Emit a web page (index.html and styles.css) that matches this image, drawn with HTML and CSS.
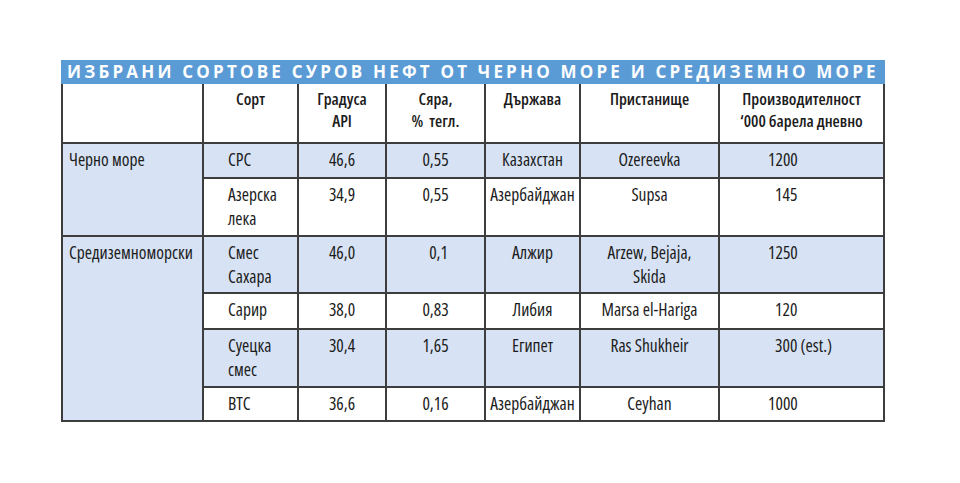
FILE: index.html
```html
<!DOCTYPE html>
<html lang="bg">
<head>
<meta charset="utf-8">
<title>Избрани сортове суров нефт</title>
<link rel="stylesheet" href="styles.css">
</head>
<body>
<div class="page">
  <div class="sheet">
    <div class="title">ИЗБРАНИ СОРТОВЕ СУРОВ НЕФТ ОТ ЧЕРНО МОРЕ И СРЕДИЗЕМНО МОРЕ</div>
    <table class="grid">
      <colgroup>
        <col class="c1"><col class="c2"><col class="c3"><col class="c4"><col class="c5"><col class="c6"><col class="c7">
      </colgroup>
      <thead>
        <tr class="r-head">
          <th></th>
          <th>Сорт</th>
          <th>Градуса<br>API</th>
          <th>Сяра,<br>%&nbsp; тегл.</th>
          <th>Държава</th>
          <th>Пристанище</th>
          <th>Производителност<br>‘000 барела дневно</th>
        </tr>
      </thead>
      <tbody>
        <tr class="r-1 blue">
          <td class="region" rowspan="2">Черно море</td>
          <td class="sort">CPC</td>
          <td>46,6</td>
          <td>0,55</td>
          <td>Казахстан</td>
          <td>Ozereevka</td>
          <td class="prod">1200</td>
        </tr>
        <tr class="r-2">
          <td class="sort">Азерска<br>лека</td>
          <td>34,9</td>
          <td>0,55</td>
          <td>Азербайджан</td>
          <td>Supsa</td>
          <td class="prod short">145</td>
        </tr>
        <tr class="r-3 blue">
          <td class="region" rowspan="4">Средиземноморски</td>
          <td class="sort">Смес<br>Сахара</td>
          <td>46,0</td>
          <td class="shift">0,1</td>
          <td>Алжир</td>
          <td>Arzew, Bejaja,<br>Skida</td>
          <td class="prod">1250</td>
        </tr>
        <tr class="r-4">
          <td class="sort">Сарир</td>
          <td>38,0</td>
          <td>0,83</td>
          <td>Либия</td>
          <td>Marsa el-Hariga</td>
          <td class="prod short">120</td>
        </tr>
        <tr class="r-5 blue">
          <td class="sort">Суецка<br>смес</td>
          <td>30,4</td>
          <td>1,65</td>
          <td>Египет</td>
          <td>Ras Shukheir</td>
          <td class="prod short">300 (est.)</td>
        </tr>
        <tr class="r-6">
          <td class="sort">BTC</td>
          <td>36,6</td>
          <td>0,16</td>
          <td>Азербайджан</td>
          <td>Ceyhan</td>
          <td class="prod">1000</td>
        </tr>
      </tbody>
    </table>
  </div>
</div>
</body>
</html>
```

FILE: styles.css
```css
html, body {
  margin: 0;
  padding: 0;
  background: #ffffff;
}

.page {
  padding: 60px 0 0 61px;
}

.sheet {
  width: 824px;
}

.title {
  background: #5b9bd5;
  color: #ffffff;
  font-family: "Open Sans", "DejaVu Sans", sans-serif;
  font-weight: 700;
  font-size: 17px;
  line-height: 24px;
  height: 24px;
  letter-spacing: 3.2px;
  padding-left: 6px;
  white-space: nowrap;
  overflow: hidden;
}

.grid {
  width: 824px;
  border-collapse: collapse;
  table-layout: fixed;
  font-family: "Open Sans", "Noto Sans", "DejaVu Sans Condensed", sans-serif;
  font-stretch: 75%;
  font-size: 17.5px;
  line-height: 24px;
  color: #1c1c1c;
}

.c1 { width: 141px; }
.c2 { width: 95px; }
.c3 { width: 88px; }
.c4 { width: 99px; }
.c5 { width: 95px; }
.c6 { width: 139px; }
.c7 { width: 165px; }

.grid th,
.grid td {
  border: 2px solid #3d3d3d;
  vertical-align: top;
  text-align: center;
  padding: 3px 4px 0 4px;
}

.grid thead th {
  border-top: none;
  font-weight: 600;
  font-size: 16.5px;
  line-height: 22px;
  padding-top: 4px;
}

.r-head { height: 59px; }
.r-1 { height: 35px; }
.r-2 { height: 58px; }
.r-3 { height: 57px; }
.r-4 { height: 36px; }
.r-5 { height: 58px; }
.r-6 { height: 34px; }

.blue td { background: #d7e3f4; }

.grid td.region {
  background: #d7e3f4;
  text-align: left;
  padding-left: 6px;
}

.grid td.sort {
  text-align: left;
  padding-left: 24px;
}

.grid td.prod {
  text-align: left;
  padding-left: 48px;
}

.grid td.prod.short {
  padding-left: 55px;
}

.grid td.shift {
  padding-left: 10px;
}
```
